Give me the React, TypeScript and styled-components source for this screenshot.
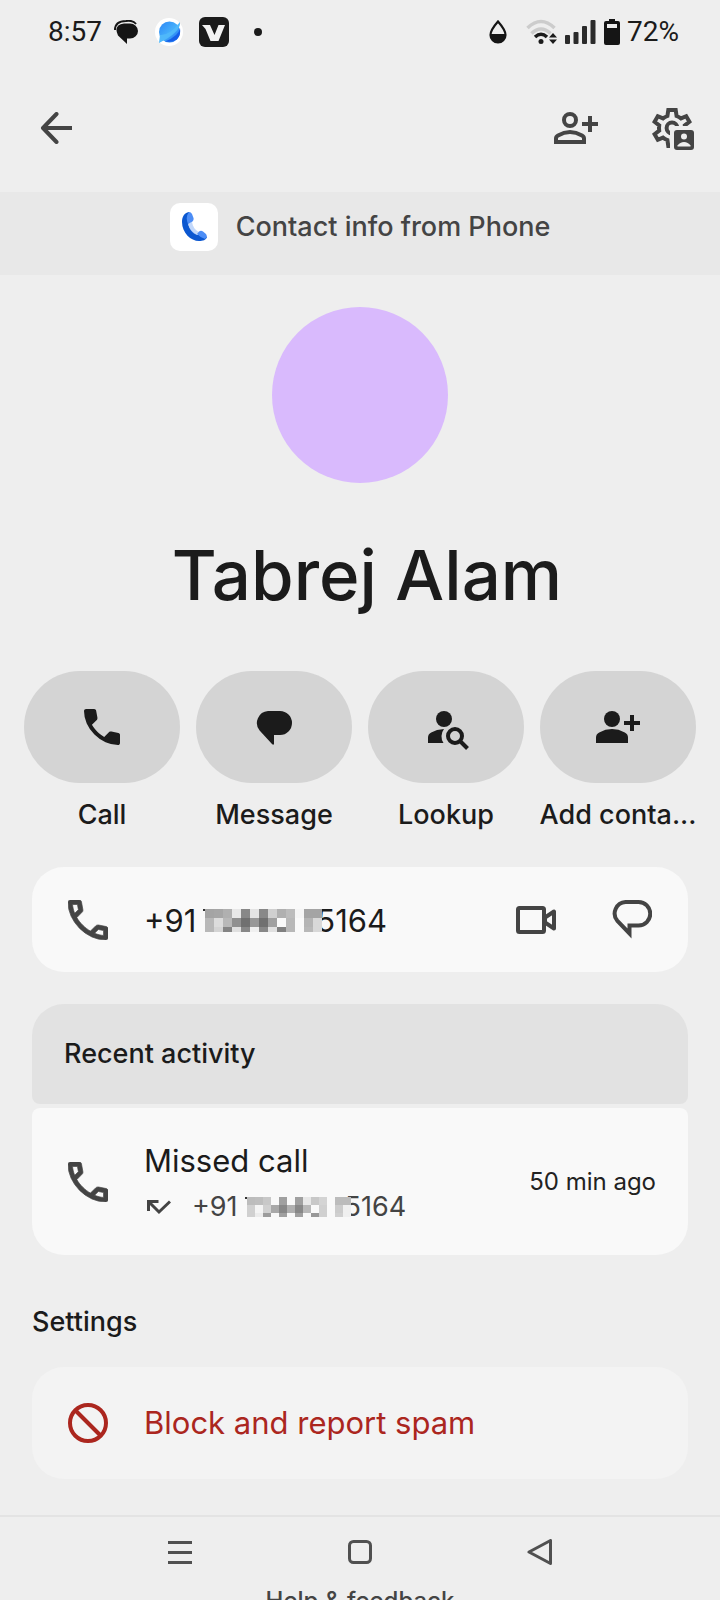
import React from "react";
import styled, { createGlobalStyle } from "styled-components";

const GlobalStyle = createGlobalStyle`
  *, *::before, *::after { box-sizing: border-box; }
  body { margin: 0; background: #eeeeee; }
  button { font: inherit; color: inherit; background: none; border: 0; padding: 0; cursor: pointer; }
  h1, h2, p { margin: 0; font-size: inherit; font-weight: inherit; }
  svg { display: block; flex: none; }
`;

const Screen = styled.div`
  height: 100vh;
  overflow: hidden;
  display: flex;
  flex-direction: column;
  background: #eeeeee;
  color: #1b1b1b;
  font-family: Inter, Roboto, sans-serif;
  font-size: 27px;
  line-height: 36px;
  white-space: nowrap;

  & > * { flex: none; }
`;

const StatusBar = styled.div`
  display: flex;
  align-items: center;
  justify-content: space-between;
  height: 64px;
  padding: 0 41px 0 48px;
  font-family: Roboto, sans-serif;
  font-size: 28px;
`;

const StatusGroup = styled.div<{ $gap: number }>`
  display: flex;
  align-items: center;
  gap: ${(p) => p.$gap}px;
`;

const StatusTime = styled.time`
  margin-right: -4px;
`;

const StatusPair = styled.span`
  display: flex;
  align-items: center;
  gap: 7px;
`;

const StatusSpacer = styled.span`
  width: 3px;
`;

const Toolbar = styled.header`
  display: flex;
  align-items: center;
  justify-content: space-between;
  height: 128px;
  padding: 0 24px 0 32px;
  color: #444444;
`;

const ToolbarActions = styled.div`
  display: flex;
  gap: 48px;
`;

const IconButton = styled.button`
  display: grid;
  place-items: center;
  width: 48px;
  height: 48px;
`;

const SourceBanner = styled.div`
  display: flex;
  align-items: flex-start;
  justify-content: center;
  gap: 18px;
  height: 83px;
  padding-top: 11px;
  background: #e8e8e8;
  color: #444444;
  font-weight: 500;
`;

const AppBadge = styled.span`
  display: grid;
  place-items: center;
  width: 48px;
  height: 48px;
  border-radius: 10px;
  background: #ffffff;
`;

const BannerText = styled.p`
  line-height: 48px;
`;

const Avatar = styled.div`
  align-self: center;
  width: 176px;
  height: 176px;
  margin-top: 32px;
  border-radius: 50%;
  background: #d9bafd;
`;

const Name = styled.h1`
  padding-left: 14px;
  margin-top: 48px;
  text-align: center;
  font-size: 69px;
  font-weight: 500;
  line-height: 88px;
`;

const Actions = styled.div`
  display: grid;
  grid-template-columns: repeat(4, 1fr);
  gap: 16px;
  padding: 0 24px;
  margin-top: 52px;
`;

const Action = styled.button`
  display: flex;
  flex-direction: column;
  align-items: center;
  gap: 14px;
  min-width: 0;
  font-weight: 500;
`;

const ActionPill = styled.span`
  display: grid;
  place-items: center;
  width: 100%;
  height: 112px;
  border-radius: 56px;
  background: #d4d4d4;
`;

const Card = styled.section<{ $tone?: string; $radius?: string }>`
  display: flex;
  align-items: center;
  margin: 0 32px;
  padding: 0 32px 0 36px;
  border-radius: ${(p) => p.$radius ?? "32px"};
  background: ${(p) => p.$tone ?? "#f9f9f9"};
`;

const PhoneCard = styled(Card)`
  height: 105px;
  margin-top: 34px;
`;

const RecentHeader = styled(Card)`
  height: 100px;
  margin-top: 32px;
  padding-left: 32px;
  font-weight: 500;
`;

const RecentItem = styled(Card)`
  height: 147px;
  margin-top: 4px;
`;

const BlockCard = styled(Card)`
  height: 112px;
  margin-top: 27px;
  color: #ab261e;
`;

const BlockButton = styled.button`
  display: flex;
  align-items: center;
  gap: 36px;
  height: 100%;
  flex: 1;
`;

const CardBody = styled.div`
  flex: 1;
  display: flex;
  flex-direction: column;
  gap: 8px;
  margin-left: 36px;
  padding-top: 2px;
`;

const CardActions = styled.div`
  display: flex;
  gap: 48px;
  color: #444444;
`;

const RowTitle = styled.p`
  font-size: 31px;
  line-height: 40px;
`;

const PhoneNumber = styled.span`
  display: inline-flex;
  align-items: center;

  svg {
    position: relative;
    margin: 0 -6px 0 7px;
  }
`;

const CallDetail = styled.p`
  display: flex;
  align-items: center;
  gap: 21px;
  padding-left: 3px;
  color: #444444;
`;

const TimeAgo = styled.time`
  font-size: 24px;
  color: #222222;
`;

const SectionTitle = styled.h2`
  margin: 49px 32px 0;
  font-weight: 500;
`;

const NavBar = styled.nav`
  display: grid;
  grid-template-columns: repeat(3, 1fr);
  justify-items: center;
  align-items: center;
  height: 72px;
  margin-top: 36px;
  padding: 0 90px;
  border-top: 2px solid #e3e3e3;
  color: #505050;
`;

const HelpLink = styled.a`
  align-self: center;
  color: #444444;
  text-decoration: none;
  font-size: 24px;
  font-weight: 500;
  line-height: 28px;
`;

const DarkTone = styled.span`
  color: #444444;
`;

const CALL_BODY =
  "M19.95 21q-3.125 0-6.175-1.363t-5.55-3.862t-3.862-5.55T3 4.05q0-.45.3-.75t.75-.3H8.1q.35 0 .625.238t.325.562l.65 3.5q.05.4-.025.675T9.4 8.45L6.975 10.9q.5.925 1.187 1.787t1.513 1.663q.775.775 1.625 1.438T13.1 17l2.35-2.35q.225-.225.588-.338t.712-.062l3.45.7q.35.1.575.363T21 15.9v4.05q0 .45-.3.75t-.75.3";
const CALL_HOLES =
  "M6.025 9l1.65-1.65L7.25 5H5.025q.125 1.025.35 2.025T6.025 9zm8.95 8.95q.975.425 1.988.675T19 18.95v-2.2l-2.35-.475z";

const CallFilled = () => (
  <svg width="36" height="36" viewBox="3 3 18 18" fill="currentColor"><path d={CALL_BODY} /></svg>
);

const CallOutline = () => (
  <DarkTone>
    <svg width="40" height="40" viewBox="3 3 18 18" fill="currentColor" fillRule="evenodd" stroke="currentColor" strokeWidth=".3">
      <path d={CALL_BODY + "z" + CALL_HOLES} />
    </svg>
  </DarkTone>
);

const BubbleFilled = () => (
  <svg width="36" height="36" viewBox="0 0 36 36" fill="currentColor">
    <path d="M12 2H24A12 12 0 0 1 24 26H18V35Q17.4 36.400 16 35L3.600 21.500A12 12 0 0 1 12 2Z" />
  </svg>
);

const BubbleOutline = () => (
  <svg width="40" height="40" viewBox="0 0 40 40" fill="none" stroke="currentColor" strokeWidth="4">
    <path d="M13.5 2H26.5A11.5 11.5 0 0 1 26.5 25.500H17.500V33.500L5.200 20.600A11.5 11.5 0 0 1 13.5 2Z" />
  </svg>
);

const PersonAddFilled = () => (
  <svg width="44" height="32" viewBox="0 0 44 32" fill="currentColor">
    <circle cx="16" cy="8" r="8" />
    <path d="M0 32V26.5Q0 23 3.2 21.4Q9.4 18 16 18T28.8 21.4Q32 23 32 26.5V32Z" />
    <path d="M34 4h4v6h6v4h-6v6h-4v-6h-6v-4h6z" />
  </svg>
);

const PersonAddOutline = () => (
  <svg width="44" height="32" viewBox="0 0 44 32" fill="none" stroke="currentColor" strokeWidth="4">
    <circle cx="16" cy="8" r="6" />
    <path d="M2 30V26.5Q2 24.5 4 23.4Q10 20 16 20T28 23.4Q30 24.5 30 26.5V30Z" />
    <path d="M36 4v16M28 12h16" />
  </svg>
);

const PersonSearch = () => (
  <svg width="48" height="40" viewBox="-6 -3 48 40" fill="none" stroke="currentColor" strokeWidth="4" overflow="visible">
    <circle cx="16" cy="9" r="8" fill="currentColor" stroke="none" />
    <path d="M0 33V27.5Q0 24 3.2 22.4Q8.5 19.4 16 19A12 12 0 0 0 15.5 33Z" fill="currentColor" stroke="none" />
    <circle cx="27" cy="26" r="7" />
    <path d="M32 31L39.5 38.5" />
  </svg>
);

const GearPerson = () => (
  <svg width="48" height="48" viewBox="0 0 48 48">
    <g transform="scale(2)" fill="none" stroke="currentColor" strokeWidth="2">
      <path d="M10.15 3H13.85L14.3 6Q15.6 6.5 16.5 7.2L19.1 6.1L20.7 8.9L18.4 10.7Q18.6 12 18.4 13.3L20.7 15.1L19.1 17.9L16.5 16.8Q15.6 17.5 14.3 18L13.85 21H10.15L9.7 18Q8.4 17.5 7.5 16.8L4.9 17.9L3.3 15.1L5.6 13.3Q5.4 12 5.6 10.7L3.3 8.9L4.9 6.1L7.5 7.2Q8.4 6.5 9.7 6Z" />
      <circle cx="12" cy="12" r="2.7" />
    </g>
    <path d="M22 48V22H48V48Z" fill="#eeeeee" />
    <rect x="26" y="26" width="20" height="20" rx="3" fill="currentColor" />
    <circle cx="36" cy="32.5" r="3" fill="#eeeeee" />
    <path d="M29.5 42.5V41.5Q32 38 36 38T42.5 41.5V42.5Z" fill="#eeeeee" />
  </svg>
);

const BackArrow = () => (
  <svg width="32" height="32" viewBox="0 0 32 32" fill="none" stroke="currentColor" strokeWidth="4" strokeLinecap="round" strokeLinejoin="round">
    <path d="M16.5 2L3 16L16.5 30" /><path d="M3 16H32" strokeLinecap="butt" />
  </svg>
);

const VideoIcon = () => (
  <svg width="40" height="40" viewBox="0 0 40 40" fill="none" stroke="currentColor" strokeWidth="4" strokeLinejoin="round">
    <rect x="2" y="8" width="26" height="24" rx="1.5" />
    <path d="M29 17.500L38 11.500V28.500L29 22.500Z" />
  </svg>
);

const BlockIcon = () => (
  <svg width="40" height="40" viewBox="0 0 40 40" fill="none" stroke="currentColor" strokeWidth="4">
    <circle cx="20" cy="20" r="18" /><path d="M8 8L32 32" />
  </svg>
);

const MissedIcon = () => (
  <svg width="24" height="16" viewBox="0 0 24 16" fill="none" stroke="currentColor" strokeWidth="3">
    <path d="M1.5 12V2.500H11.500M2 3L12 13L23 2.500" />
  </svg>
);

const PhoneAppLogo = () => (
  <svg width="26" height="30" viewBox="0 0 26 30">
    <path d="M8 0C3 1 1 5 1 10C1 21 10 29 18 29C22 29 25 28 26 25L20 20L17 23C12 21 8 17 7 11L11 8Z" fill="#0b57d0" />
    <path d="M7 11L11 10C12 15 14 18 18 20L16 23C11 21 8 17 7 11Z" fill="#a8c7fa" opacity=".7" />
    <path d="M8 0Q10 0 11 2L12.5 6Q13 8 11.5 9.5L7 12Q4 5 8 0ZM16 22L18 19.5Q20 18 22 19.5L25 22Q27 25 24 27Q20 26 16 22Z" fill="#4c8df6" />
  </svg>
);

const ChatStatus = () => (
  <svg width="25" height="24" viewBox="0 0 25 24">
    <path d="M1 10Q1 1 12 1Q19 0 22 4" fill="none" stroke="#151515" strokeWidth="2" />
    <path d="M10 3.500H16A8 7.500 0 0 1 16 18.500H13V24L4 15.500Q-1 5 10 3.500Z" fill="#151515" />
  </svg>
);

const BallStatus = () => (
  <svg width="28" height="28" viewBox="0 0 28 28">
    <defs>
      <linearGradient id="ball" x1="0" y1="0" x2="1" y2="1">
        <stop offset="0" stopColor="#2c86f5" /><stop offset=".5" stopColor="#45aefb" /><stop offset="1" stopColor="#1560ee" />
      </linearGradient>
    </defs>
    <circle cx="14" cy="14" r="14" fill="#ffffff" />
    <circle cx="14.5" cy="14" r="10.5" fill="url(#ball)" />
    <path d="M4 25L5 17Q14 18 25 4Q26 14 4 25Z" fill="#4fb8fa" />
    <path d="M10 23.5Q24 18 25 10Q27 25 10 23.5Z" fill="#155fe8" />
  </svg>
);

const VStatus = () => (
  <svg width="30" height="30" viewBox="0 0 30 30">
    <rect width="30" height="30" rx="6" fill="#1b1b1b" />
    <path d="M3 8H11L15.5 18L19.5 8H26L19.5 24H11.5L6.5 12Z" fill="#f2f2f2" />
  </svg>
);

const DotStatus = () => (
  <svg width="17" height="8" viewBox="0 0 17 8"><circle cx="13" cy="4" r="4" fill="#1b1b1b" /></svg>
);

const DropStatus = () => (
  <svg width="18" height="24" viewBox="0 0 18 24">
    <path d="M9 1.5Q1.5 10 1.5 15A7.5 7.5 0 0 0 16.5 15Q16.5 10 9 1.5Z" fill="none" stroke="#151515" strokeWidth="2.2" />
    <path d="M1 14H17A8 9 0 0 1 1 14Z" fill="#151515" />
  </svg>
);

const WifiStatus = () => (
  <svg width="31" height="26" viewBox="0 0 31 26" fill="none" strokeWidth="3.5">
    <path d="M1.5 9Q15 -4 28.5 9M5.5 14.5Q15 5.5 24.5 14.5" stroke="#cccccc" />
    <path d="M9 18Q15 12.5 21 18" stroke="#1b1b1b" />
    <circle cx="15" cy="22.5" r="2.5" fill="#1b1b1b" />
    <path d="M23 18.5L27 14L31 18.5ZM23 20.5H31L27 25Z" fill="#1b1b1b" />
  </svg>
);

const SignalStatus = () => (
  <svg width="31" height="24" viewBox="0 0 31 24" fill="#2a2a2a">
    <rect x="0" y="15" width="5" height="9" rx="1" /><rect x="8.5" y="12" width="5" height="12" rx="1" />
    <rect x="17" y="6" width="5" height="18" rx="1" /><rect x="25.5" y="0" width="5" height="24" rx="1" />
  </svg>
);

const BatteryStatus = () => (
  <svg width="16" height="26" viewBox="0 0 16 26">
    <path d="M5 0H11V2H14Q16 2 16 4V24Q16 26 14 26H2Q0 26 0 24V4Q0 2 2 2H5Z" fill="#151515" />
    <rect x="3" y="5" width="10" height="4" fill="#eeeeee" />
  </svg>
);

const MOSAIC: string[][] = [
  ["a4", "a6", "b0", "e8", "88", "e4", "88", "d0", "b0", "bc", "f5", "a4", "a4"],
  ["b8", "dc", "b8", "90", "70", "98", "70", "a0", "f9", "b8", "f9", "b4", "d8"],
  ["b8", "d4", "84", "e0", "88", "f0", "88", "e0", "80", "b8", "f9", "b8", "d8"],
];

const Redaction = ({ width, height, lift = 0 }: { width: number; height: number; lift?: number }) => (
  <svg width={width} height={height} viewBox="0 0 119 23" preserveAspectRatio="none" shapeRendering="crispEdges">
    <rect width="4" height="2" fill="#333333" />
    {MOSAIC.map((row, y) =>
      row.map((c, x) => {
        const v = Math.min(249, parseInt(c, 16) + lift);
        return (
          <rect key={`${x}-${y}`} x={2 + x * 9} y={y * 9} width="9" height={y === 2 ? 5 : 9} fill={`rgb(${v},${v},${v})`} />
        );
      })
    )}
  </svg>
);

const actions = [
  { label: "Call", icon: <CallFilled /> },
  { label: "Message", icon: <BubbleFilled /> },
  { label: "Lookup", icon: <PersonSearch /> },
  { label: "Add conta...", icon: <PersonAddFilled /> },
];

export default function App() {
  return (
    <Screen>
      <GlobalStyle />
      <StatusBar>
        <StatusGroup $gap={16}>
          <StatusTime>8:57</StatusTime>
          <ChatStatus />
          <BallStatus />
          <VStatus />
          <DotStatus />
        </StatusGroup>
        <StatusGroup $gap={8}>
          <DropStatus />
          <StatusSpacer />
          <WifiStatus />
          <SignalStatus />
          <StatusPair><BatteryStatus />72%</StatusPair>
        </StatusGroup>
      </StatusBar>

      <Toolbar>
        <IconButton aria-label="Back"><BackArrow /></IconButton>
        <ToolbarActions>
          <IconButton aria-label="Add contact"><PersonAddOutline /></IconButton>
          <IconButton aria-label="Contact settings"><GearPerson /></IconButton>
        </ToolbarActions>
      </Toolbar>

      <SourceBanner>
        <AppBadge><PhoneAppLogo /></AppBadge>
        <BannerText>Contact info from Phone</BannerText>
      </SourceBanner>

      <Avatar />
      <Name>Tabrej Alam</Name>

      <Actions>
        {actions.map((a) => (
          <Action key={a.label}>
            <ActionPill>{a.icon}</ActionPill>
            {a.label}
          </Action>
        ))}
      </Actions>

      <PhoneCard>
        <CallOutline />
        <CardBody>
          <RowTitle>
            <PhoneNumber>+91<Redaction width={119} height={23} />5164</PhoneNumber>
          </RowTitle>
        </CardBody>
        <CardActions>
          <IconButton aria-label="Video call"><VideoIcon /></IconButton>
          <IconButton aria-label="Send message"><BubbleOutline /></IconButton>
        </CardActions>
      </PhoneCard>

      <RecentHeader as="h2" $tone="#e2e2e2" $radius="32px 32px 8px 8px">Recent activity</RecentHeader>
      <RecentItem $radius="8px 8px 32px 32px">
        <CallOutline />
        <CardBody>
          <RowTitle>Missed call</RowTitle>
          <CallDetail>
            <MissedIcon />
            <PhoneNumber>+91<Redaction width={106} height={20} lift={24} />5164</PhoneNumber>
          </CallDetail>
        </CardBody>
        <TimeAgo>50 min ago</TimeAgo>
      </RecentItem>

      <SectionTitle>Settings</SectionTitle>
      <BlockCard $tone="#f3f3f3">
        <BlockButton>
          <BlockIcon />
          <RowTitle as="span">Block and report spam</RowTitle>
        </BlockButton>
      </BlockCard>

      <NavBar>
        <IconButton aria-label="Recent apps">
          <svg width="24" height="24" viewBox="0 0 24 24" fill="currentColor"><path d="M0 1h24v3H0zM0 11h24v3H0zM0 21h24v3H0z" /></svg>
        </IconButton>
        <IconButton aria-label="Home">
          <svg width="24" height="24" viewBox="0 0 24 24" fill="none" stroke="currentColor" strokeWidth="3"><rect x="1.5" y="1.5" width="21" height="21" rx="4" /></svg>
        </IconButton>
        <IconButton aria-label="Go back">
          <svg width="26" height="26" viewBox="0 0 26 26" fill="none" stroke="currentColor" strokeWidth="3" strokeLinejoin="round"><path d="M2 13L23.5 1.5V24.5Z" /></svg>
        </IconButton>
      </NavBar>
      <HelpLink href="#help">Help &amp; feedback</HelpLink>
    </Screen>
  );
}
